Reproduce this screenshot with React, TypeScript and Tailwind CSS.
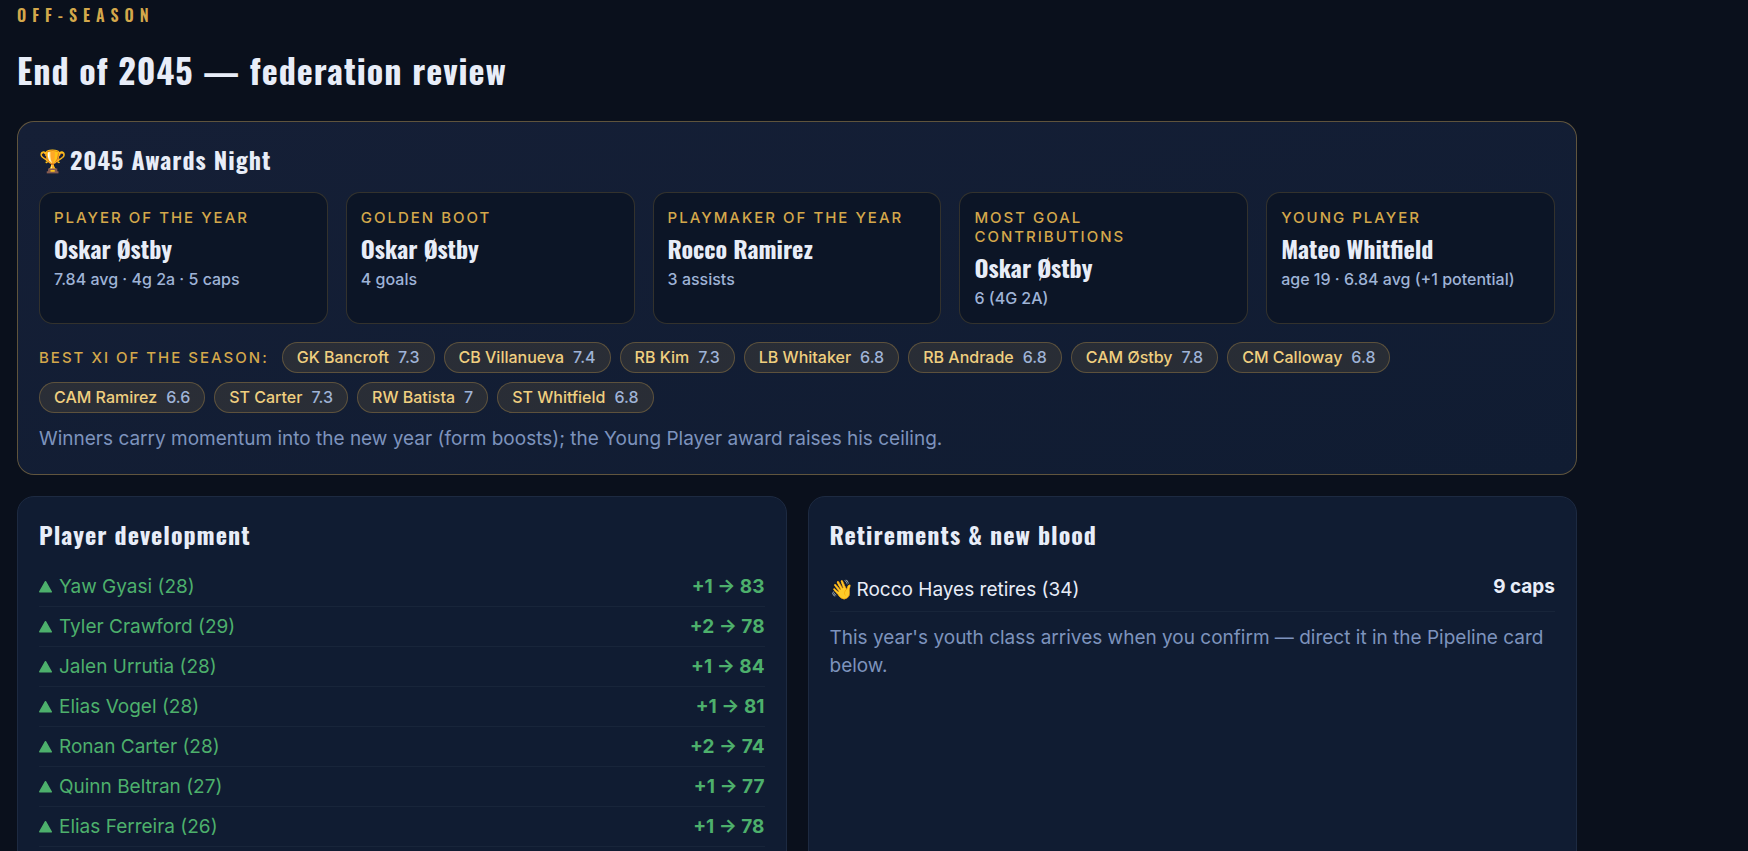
import type { ReactNode } from 'react';

interface Award {
    label: string;
    winner: string;
    detail: string;
}

interface Pick {
    player: string;
    rating: string;
}

interface Development {
    name: string;
    change: string;
}

const awards: Award[] = [
    { label: 'Player of the Year', winner: 'Oskar Østby', detail: '7.84 avg · 4g 2a · 5 caps' },
    { label: 'Golden Boot', winner: 'Oskar Østby', detail: '4 goals' },
    { label: 'Playmaker of the Year', winner: 'Rocco Ramirez', detail: '3 assists' },
    { label: 'Most Goal Contributions', winner: 'Oskar Østby', detail: '6 (4G 2A)' },
    { label: 'Young Player', winner: 'Mateo Whitfield', detail: 'age 19 · 6.84 avg (+1 potential)' }
];

const bestEleven: Pick[] = [
    { player: 'GK Bancroft', rating: '7.3' },
    { player: 'CB Villanueva', rating: '7.4' },
    { player: 'RB Kim', rating: '7.3' },
    { player: 'LB Whitaker', rating: '6.8' },
    { player: 'RB Andrade', rating: '6.8' },
    { player: 'CAM Østby', rating: '7.8' },
    { player: 'CM Calloway', rating: '6.8' },
    { player: 'CAM Ramirez', rating: '6.6' },
    { player: 'ST Carter', rating: '7.3' },
    { player: 'RW Batista', rating: '7' },
    { player: 'ST Whitfield', rating: '6.8' }
];

const developments: Development[] = [
    { name: 'Yaw Gyasi (28)', change: '+1 → 83' },
    { name: 'Tyler Crawford (29)', change: '+2 → 78' },
    { name: 'Jalen Urrutia (28)', change: '+1 → 84' },
    { name: 'Elias Vogel (28)', change: '+1 → 81' },
    { name: 'Ronan Carter (28)', change: '+2 → 74' },
    { name: 'Quinn Beltran (27)', change: '+1 → 77' },
    { name: 'Elias Ferreira (26)', change: '+1 → 78' }
];

function CardTitle({ children }: { children: ReactNode }) {
    return (
        <h2 className="mb-[17px] flex items-center gap-1 font-['Oswald',sans-serif] text-2xl leading-8 font-bold tracking-[1px]">
            {children}
        </h2>
    );
}

function UpIcon() {
    return (
        <svg viewBox="0 0 13 13" className="size-[13px]" aria-hidden="true">
            <path
                d="M6.5 0.7 L12.3 10.8 H0.7 Z"
                fill="currentColor"
                stroke="currentColor"
                strokeWidth="1.4"
                strokeLinejoin="round"
            />
        </svg>
    );
}

export default function App() {
    return (
        <div className="min-h-screen bg-[#0a101c] font-['Inter',sans-serif] text-[19px] leading-7 text-[#e8edf8]">
            <main className="w-full max-w-[1594px] px-[17px]">
                <header className="pb-[29px]">
                    <p className="font-['Oswald',sans-serif] text-base leading-[30px] font-semibold tracking-[6px] text-[#d4a84b] uppercase">
                        Off-season
                    </p>
                    <h1 className="mt-[17px] font-['Oswald',sans-serif] text-[34px] leading-[45px] font-bold tracking-[1px]">
                        End of 2045 — federation review
                    </h1>
                </header>

                {/* Awards */}
                <section className="rounded-[17px] border border-[#d4a84b]/40 bg-linear-to-br from-[#151f36] to-[#101c32] p-[21px]">
                    <CardTitle>
                        <span className="text-[22px] tracking-normal">🏆</span>
                        2045 Awards Night
                    </CardTitle>
                    <ul className="grid grid-cols-5 gap-[18px]">
                        {awards.map((award) => (
                            <li
                                key={award.label}
                                className="rounded-[14px] border border-[#d4a84b]/20 bg-[#0c1526] px-[14px] pt-[15px] pb-[14px]"
                            >
                                <h3 className="text-[15px] leading-[19px] font-medium tracking-[2px] text-[#d4a84b] uppercase">
                                    {award.label}
                                </h3>
                                <p className="font-['Oswald',sans-serif] text-2xl leading-[42px] font-bold">
                                    {award.winner}
                                </p>
                                <p className="text-base leading-[21px] font-medium text-[#9fb3d6]">{award.detail}</p>
                            </li>
                        ))}
                    </ul>

                    <div className="mt-[18px] flex flex-wrap items-center gap-[9px] font-medium">
                        <span className="mr-1 text-[15px] tracking-[2px] text-[#d4a84b] uppercase">
                            Best XI of the season:
                        </span>
                        {bestEleven.map((pick) => (
                            <span
                                key={pick.player}
                                className="flex gap-[9px] rounded-full border border-[#d4a84b]/30 bg-[#d4a84b]/12 px-[14px] text-base leading-[29px] text-[#f0cf7f]"
                            >
                                {pick.player}
                                <span className="text-[#9fb3d6]">{pick.rating}</span>
                            </span>
                        ))}
                    </div>
                    <p className="mt-3 text-[#7d93bd]">
                        Winners carry momentum into the new year (form boosts); the Young Player award raises his
                        ceiling.
                    </p>
                </section>

                <div className="mt-[21px] grid grid-cols-2 gap-[21px]">
                    {/* Development */}
                    <section className="rounded-[17px] border border-[#1d2a41] bg-[#101c32] p-[21px]">
                        <CardTitle>Player development</CardTitle>
                        <ul className="text-[#4db06c]">
                            {developments.map((row) => (
                                <li
                                    key={row.name}
                                    className="flex justify-between border-b border-[#18253a] pt-[6px] pb-[5px]"
                                >
                                    <span className="flex items-center gap-[7px]">
                                        <UpIcon />
                                        {row.name}
                                    </span>
                                    <b className="font-bold">{row.change}</b>
                                </li>
                            ))}
                        </ul>
                    </section>

                    {/* Retirements */}
                    <section className="rounded-[17px] border border-[#1d2a41] bg-[#101c32] p-[21px]">
                        <CardTitle>Retirements &amp; new blood</CardTitle>
                        <ul>
                            <li className="flex justify-between border-b border-[#18253a] pt-[6px] pb-[5px]">
                                <span className="flex items-center gap-[3px] leading-[33px]">
                                    <span>👋</span>
                                    Rocco Hayes retires (34)
                                </span>
                                <b className="font-bold">9 caps</b>
                            </li>
                        </ul>
                        <p className="mt-3 text-[#7d93bd]">
                            This year's youth class arrives when you confirm — direct it in the Pipeline card below.
                        </p>
                    </section>
                </div>
            </main>
        </div>
    );
}
